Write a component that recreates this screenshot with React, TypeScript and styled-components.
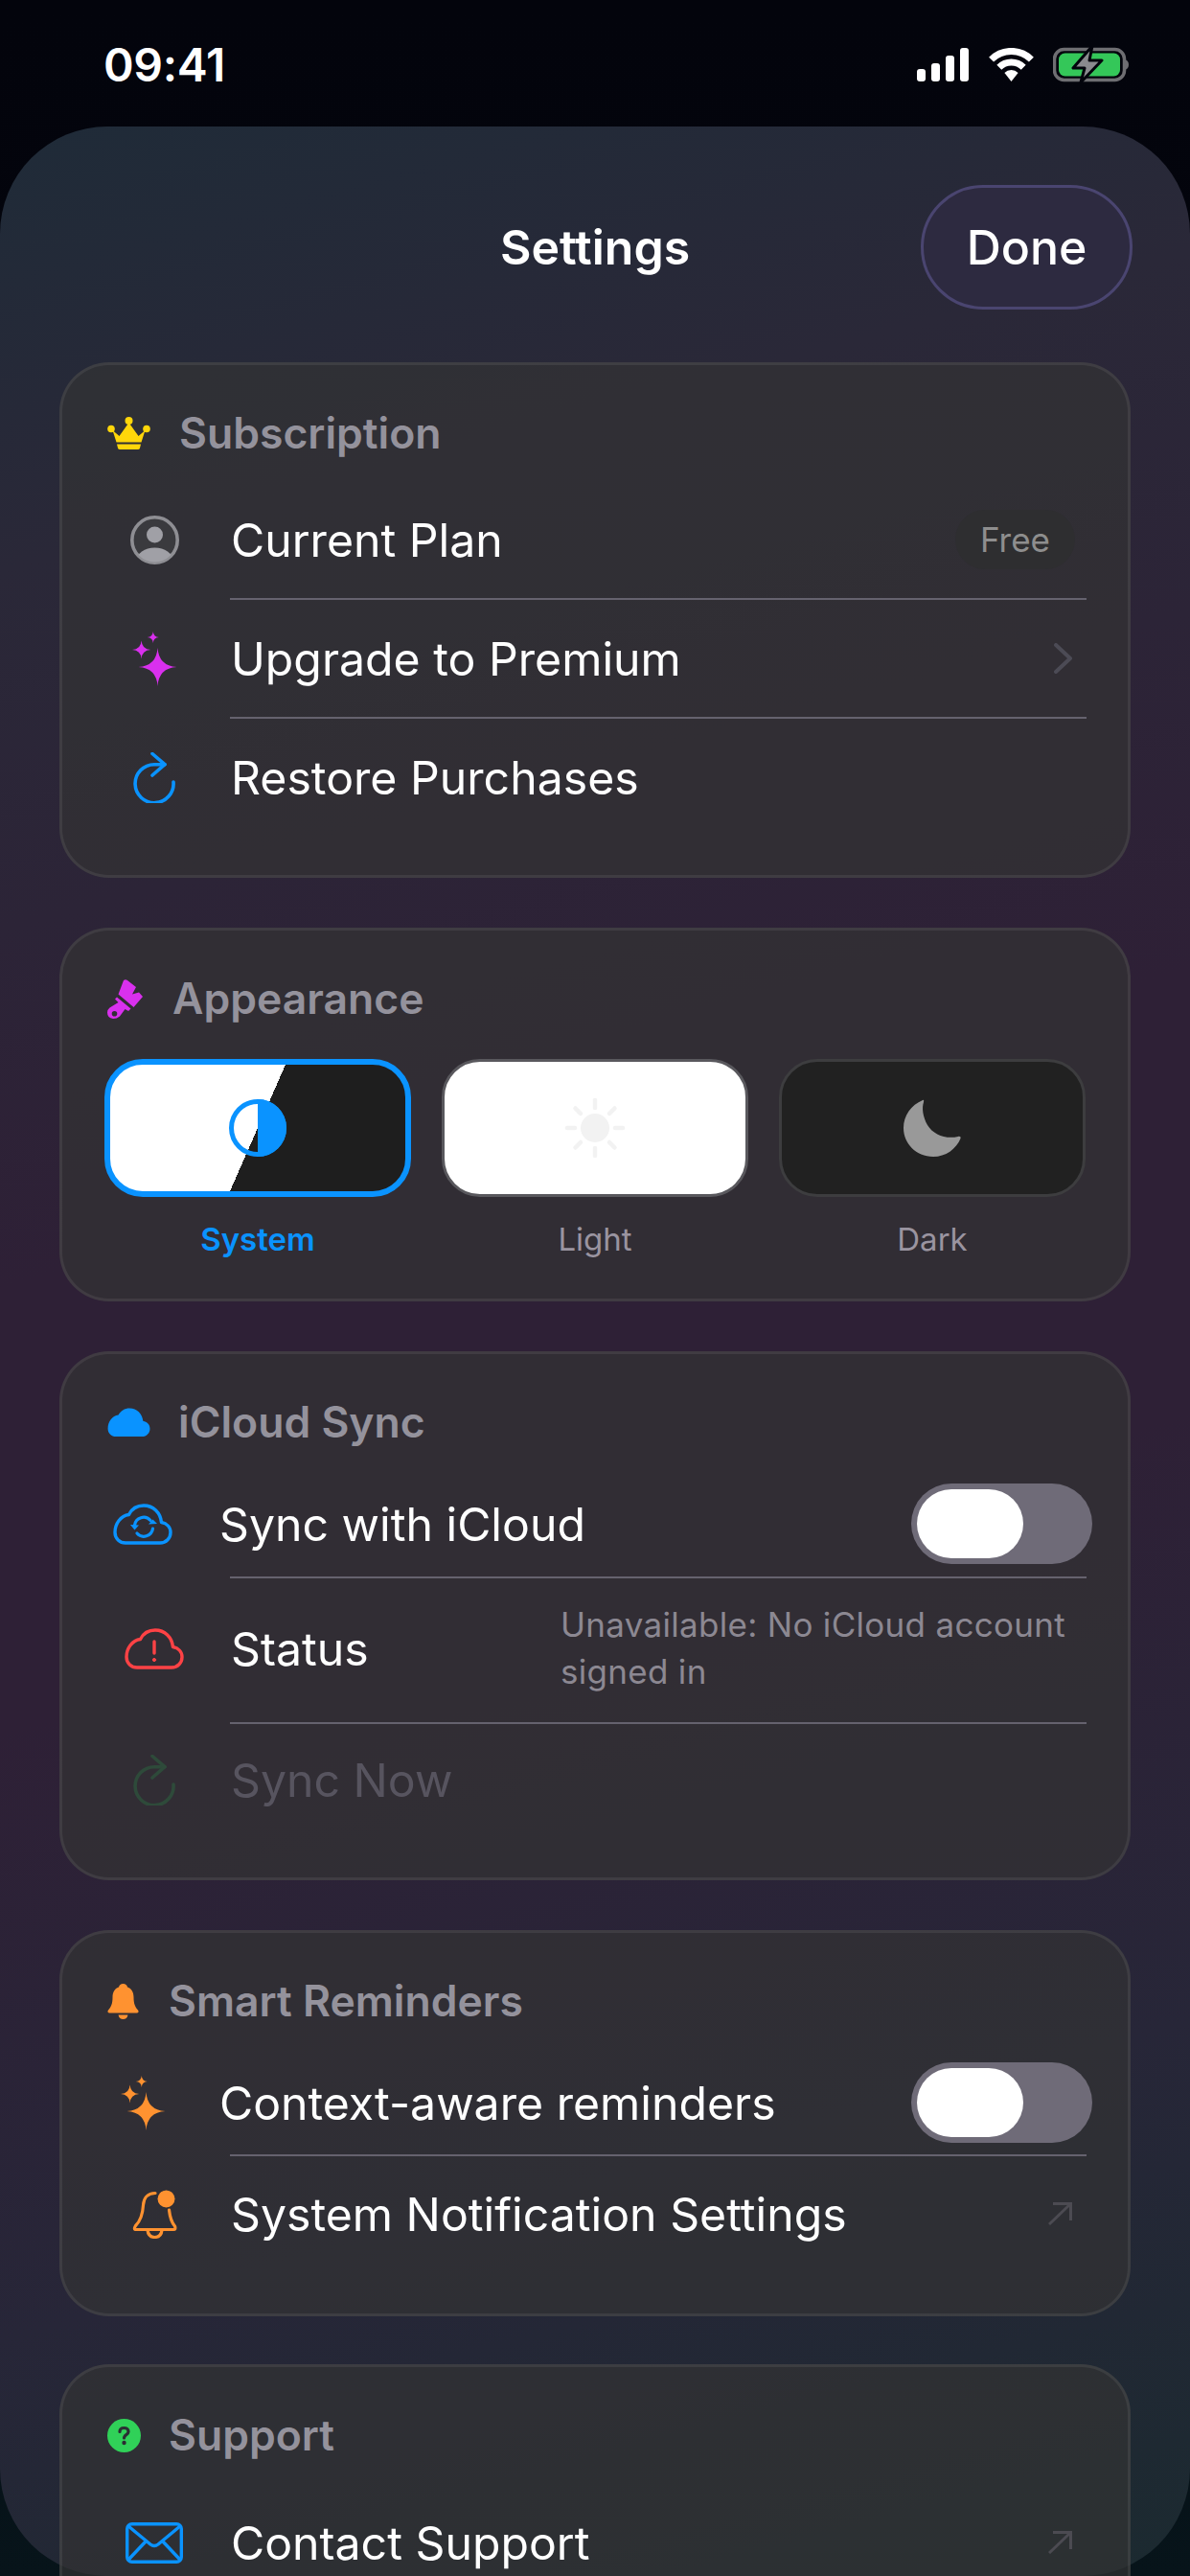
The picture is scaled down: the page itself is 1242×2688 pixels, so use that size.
import styled, { createGlobalStyle } from "styled-components";

const GlobalStyle = createGlobalStyle`
    html, body {
        margin: 0;
        padding: 0;
        background: #03040c;
    }
    * {
        box-sizing: border-box;
    }
`

const star = (cx: number, cy: number, r: number, w = r * 0.06) =>
    `M${cx} ${cy - r}Q${cx + w} ${cy - w} ${cx + r} ${cy}Q${cx + w} ${cy + w} ${cx} ${cy + r}Q${cx - w} ${cy + w} ${cx - r} ${cy}Q${cx - w} ${cy - w} ${cx} ${cy - r}Z`;

const CLOUD = "M13 41H49C55.5 41 60 36 60 30C60 24.5 56 20.5 50.5 19.5C49.5 9.5 42 2 32 2C25 2 19.5 5.5 16.5 11.5C8 12.5 2 21 2 30C2 36.5 7 41 13 41Z";

const Signal = () => (
    <svg width="55" height="35" viewBox="0 0 55 35" fill="#fff">
        <rect x="0" y="22" width="9" height="13" rx="3" />
        <rect x="15" y="16" width="9" height="19" rx="3" />
        <rect x="30" y="8" width="9" height="27" rx="3" />
        <rect x="45" y="0" width="9" height="35" rx="3" />
    </svg>
);

const Wifi = () => (
    <svg width="47" height="35" viewBox="0 0 47 35" fill="none" stroke="#fff" strokeWidth="7">
        <path d="M2.6 12.1A29.5 29.5 0 0 1 44.4 12.1" />
        <path d="M10.8 20.3A18 18 0 0 1 36.2 20.3" />
        <path d="M23.5 35L16.4 25.9A10 10 0 0 1 30.6 25.9Z" fill="#fff" stroke="none" />
    </svg>
);

const Battery = () => (
    <svg width="79" height="39" viewBox="0 0 79 39" fill="none">
        <rect x="1.5" y="3.5" width="73" height="32" rx="10" stroke="#6e6e72" strokeWidth="3.5" />
        <rect x="6" y="7.5" width="64" height="24" rx="6.5" fill="#34c759" />
        <path d="M76 14.5C78 15.5 79 17 79 19.5C79 22 78 23.5 76 24.5Z" fill="#6e6e72" />
        <path d="M41 0L21 23H33L29 38L51 15H38Z" fill="#8a8a8e" stroke="#03040c" strokeWidth="3" strokeLinejoin="round" />
    </svg>
);

const Crown = () => (
    <svg width="45" height="34" viewBox="0 0 45 34" fill="#ffd60a">
        <circle cx="22.5" cy="4" r="4" />
        <circle cx="4" cy="12.5" r="3.8" />
        <circle cx="41" cy="12.5" r="3.8" />
        <path d="M5.5 14L12.5 20L22.5 6L32.5 20L39.5 14L35.5 26.5H9.5Z" />
        <path d="M10 28.5H35L34 32.5Q33.5 34 32 34H13Q11.5 34 11 32.5Z" />
    </svg>
);

const PersonCircle = () => (
    <svg width="51" height="51" viewBox="0 0 51 51">
        <defs>
            <clipPath id="person-clip"><circle cx="25.5" cy="25.5" r="23" /></clipPath>
        </defs>
        <circle cx="25.5" cy="25.5" r="23.7" fill="#3a3a3e" stroke="#8e8e93" strokeWidth="3.6" />
        <circle cx="25.5" cy="20" r="8.5" fill="#a0a0a6" />
        <ellipse cx="25.5" cy="47" rx="19" ry="13.5" fill="#a0a0a6" clipPath="url(#person-clip)" />
    </svg>
);

const Sparkles = ({ color }: { color: string }) => (
    <svg width="47" height="57" viewBox="0 0 47 57" fill={color}>
        <path d={star(26.5, 37, 20)} />
        <path d={star(9.6, 19, 9.6)} />
        <path d={star(21.8, 6, 6)} />
    </svg>
);

const Refresh = ({ color }: { color: string }) => (
    <svg width="44" height="53" viewBox="0 0 44 53" fill="none" stroke={color} strokeWidth="3.6" strokeLinecap="round" strokeLinejoin="round">
        <path d="M33 12.7H22A20 20 0 1 0 42 31" />
        <path d="M20 1.5L33 12.7L20 24" />
    </svg>
);

const Brush = () => (
    <svg width="37" height="41" viewBox="0 0 37 41" fill="#d930ee">
        <path d="M17 1Q19 -0.5 21 1L30 8L26 15.5L33 13.5L37 18L27.5 29L11.5 15.5Z" />
        <path fillRule="evenodd" d="M10 18.5L24.5 30.5L22 33L18.5 31L13 38.5Q10 41 6 41Q0 40 0 34.5Q0 31.5 2.5 29.5L11.5 24L8 20.5ZM7.5 33A2.8 2.8 0 1 0 7.5 38.6A2.8 2.8 0 1 0 7.5 33Z" />
    </svg>
);

const CloudFill = () => (
    <svg width="45" height="31" viewBox="0 0 62 43" fill="#0a93ff">
        <path d={CLOUD} transform="translate(-1.5 -1.5) scale(1.05)" />
    </svg>
);

const CloudSync = () => (
    <svg width="62" height="43" viewBox="0 0 62 43" fill="none" stroke="#0a93ff" strokeWidth="3.4" strokeLinecap="round" strokeLinejoin="round">
        <path d={CLOUD} />
        <path d="M22.5 22.5A9.5 9.5 0 0 1 39 17.5" strokeWidth="3.2" />
        <path d="M41.5 26A9.5 9.5 0 0 1 25 31" strokeWidth="3.2" />
        <path d="M18 22L27 22.5L22.5 27.5Z" fill="#0a93ff" stroke="none" />
        <path d="M37 21.5L46 21L41.5 16.5Z" fill="#0a93ff" stroke="none" />
    </svg>
);

const CloudAlert = () => (
    <svg width="62" height="43" viewBox="0 0 62 43" fill="none" stroke="#ff4245" strokeWidth="3.4" strokeLinecap="round" strokeLinejoin="round">
        <path d={CLOUD} />
        <path d="M31 14V26" />
        <circle cx="31" cy="33" r="1.6" fill="#ff4245" strokeWidth="1" />
    </svg>
);

const BellFill = () => (
    <svg width="33" height="37" viewBox="0 0 33 37" fill="#ff9230">
        <path d="M16.5 0C19 0 20.5 1.5 21 3.5C25.5 5 27.5 9 27.5 14C27.5 21 29 24 32 27.5Q33.5 30 31 30.5H2Q-0.5 30 1 27.5C4 24 5.5 21 5.5 14C5.5 9 7.5 5 12 3.5C12.5 1.5 14 0 16.5 0Z" />
        <path d="M11.5 32.5H21.5C21 35.5 19 37 16.5 37C14 37 12 35.5 11.5 32.5Z" />
    </svg>
);

const BellBadge = () => (
    <svg width="47" height="51" viewBox="0 0 47 51" fill="none" stroke="#ff9230" strokeWidth="3.2" strokeLinecap="round" strokeLinejoin="round">
        <path d="M24 3.5C16 3.5 12 9 11.5 16C11 25 9 32 3.5 37.5Q1 41.5 4 41.5H43Q46 41.5 44.5 38C41 34 39.5 30 38.5 21" />
        <path d="M16 42C16.5 47 19.5 49.5 23.5 49.5C27.5 49.5 30.5 47 31 42" />
        <circle cx="35.5" cy="9.5" r="9" fill="#ff9230" stroke="none" />
    </svg>
);

const HelpDot = () => (
    <svg width="35" height="35" viewBox="0 0 35 35">
        <circle cx="17.5" cy="17.5" r="17.5" fill="#30d158" />
        <path d="M13 13.5C13 10.5 15 9.5 17.5 9.5C20 9.5 22 11 22 13.5C22 16.5 17.5 16.5 17.5 20" fill="none" stroke="#2b2d33" strokeWidth="3.2" strokeLinecap="round" />
        <circle cx="17.5" cy="25" r="2.2" fill="#2b2d33" />
    </svg>
);

const Mail = () => (
    <svg width="60" height="43" viewBox="0 0 60 43" fill="none" stroke="#0a93ff" strokeWidth="3.4" strokeLinejoin="round">
        <rect x="1.7" y="1.7" width="56.6" height="39.6" rx="5" />
        <path d="M3 4L26 23Q30 26 34 23L57 4" />
        <path d="M3 39L21.5 19.5M57 39L38.5 19.5" />
    </svg>
);

const ArrowUpRight = () => (
    <svg width="25" height="24" viewBox="0 0 25 24" fill="none" stroke="#4c4b52" strokeWidth="3">
        <path d="M1 23L23.5 1.5" />
        <path d="M5 1.5H23.5V19" />
    </svg>
);

const Chevron = () => (
    <svg width="19" height="32" viewBox="0 0 19 32" fill="none" stroke="#4c4b55" strokeWidth="4" strokeLinecap="round" strokeLinejoin="round">
        <path d="M2 2L17 16L2 30" />
    </svg>
);

const HalfCircle = () => (
    <svg width="60" height="60" viewBox="0 0 60 60" fill="none">
        <circle cx="30" cy="30" r="27.5" stroke="#0a93ff" strokeWidth="5" />
        <path d="M30 0A30 30 0 0 1 30 60Z" fill="#0a93ff" />
    </svg>
);

const Sun = () => (
    <svg width="64" height="64" viewBox="0 0 64 64" fill="#f2f2f2">
        <circle cx="32" cy="32" r="15" />
        <g stroke="#f2f2f2" strokeWidth="4.5" strokeLinecap="round">
            <path d="M32 3V11M32 53V61M3 32H11M53 32H61M11.5 11.5L17 17M47 47L52.5 52.5M52.5 11.5L47 17M17 47L11.5 52.5" />
        </g>
    </svg>
);

const Moon = () => (
    <svg width="60" height="60" viewBox="0 0 60 60" fill="#999">
        <path d="M20 1C21 0.5 21.5 1.5 21 3C19 9 20 18 25 27C31 37 44 42 57 39C59 38.5 60 39.5 59.5 41C55 52 44 60 31 60C13 60 0 46 0 30C0 17 8 6 20 1Z" />
    </svg>
);

const App = () => {
    return (
        <StScreen>
            <GlobalStyle />
            <StStatusBar>
                <StTime>09:41</StTime>
                <StStatusIcons>
                    <Signal />
                    <Wifi />
                    <Battery />
                </StStatusIcons>
            </StStatusBar>
            <StSheet>
                <StNav>
                    <span />
                    <StTitle>Settings</StTitle>
                    <StDone>Done</StDone>
                </StNav>
                <StCards>
                    <StCard $bottom={41}>
                        <StSectionHead $gap={30}>
                            <Crown />
                            <StSectionTitle>Subscription</StSectionTitle>
                        </StSectionHead>
                        <StRows $top={20}>
                            <StRow $height={122}>
                                <StIconCell><PersonCircle /></StIconCell>
                                <StRowLabel>Current Plan</StRowLabel>
                                <StBadge>Free</StBadge>
                            </StRow>
                            <StDivider />
                            <StRow $height={122}>
                                <StIconCell><Sparkles color="#d930ee" /></StIconCell>
                                <StRowLabel>Upgrade to Premium</StRowLabel>
                                <StTrail><Chevron /></StTrail>
                            </StRow>
                            <StDivider />
                            <StRow $height={122}>
                                <StIconCell><Refresh color="#0a93ff" /></StIconCell>
                                <StRowLabel>Restore Purchases</StRowLabel>
                            </StRow>
                        </StRows>
                    </StCard>

                    <StCard $bottom={40}>
                        <StSectionHead $gap={31}>
                            <Brush />
                            <StSectionTitle>Appearance</StSectionTitle>
                        </StSectionHead>
                        <StThemes>
                            <StTheme>
                                <StThemeTile $mode="system"><HalfCircle /></StThemeTile>
                                <StThemeLabel $active>System</StThemeLabel>
                            </StTheme>
                            <StTheme>
                                <StThemeTile $mode="light"><Sun /></StThemeTile>
                                <StThemeLabel>Light</StThemeLabel>
                            </StTheme>
                            <StTheme>
                                <StThemeTile $mode="dark"><Moon /></StThemeTile>
                                <StThemeLabel>Dark</StThemeLabel>
                            </StTheme>
                        </StThemes>
                    </StCard>

                    <StCard>
                        <StSectionHead $gap={29}>
                            <CloudFill />
                            <StSectionTitle>iCloud Sync</StSectionTitle>
                        </StSectionHead>
                        <StRows $top={21}>
                            <StRow $height={110}>
                                <StIconCell $inset><CloudSync /></StIconCell>
                                <StRowLabel>Sync with iCloud</StRowLabel>
                                <StToggle><StKnob /></StToggle>
                            </StRow>
                            <StDivider />
                            <StRow $height={150} $lift={4}>
                                <StIconCell><CloudAlert /></StIconCell>
                                <StRowLabel>Status</StRowLabel>
                                <StStatusText>Unavailable: No iCloud account signed in</StStatusText>
                            </StRow>
                            <StDivider />
                            <StRow $height={116}>
                                <StIconCell><Refresh color="#2e4a3a" /></StIconCell>
                                <StRowLabel $disabled>Sync Now</StRowLabel>
                            </StRow>
                        </StRows>
                    </StCard>

                    <StCard>
                        <StSectionHead $gap={31}>
                            <BellFill />
                            <StSectionTitle>Smart Reminders</StSectionTitle>
                        </StSectionHead>
                        <StRows $top={22}>
                            <StRow $height={108}>
                                <StIconCell $inset><Sparkles color="#ff9230" /></StIconCell>
                                <StRowLabel>Context-aware reminders</StRowLabel>
                                <StToggle><StKnob /></StToggle>
                            </StRow>
                            <StDivider />
                            <StRow $height={120}>
                                <StIconCell><BellBadge /></StIconCell>
                                <StRowLabel>System Notification Settings</StRowLabel>
                                <StTrail><ArrowUpRight /></StTrail>
                            </StRow>
                        </StRows>
                    </StCard>

                    <StCard>
                        <StSectionHead $gap={29}>
                            <HelpDot />
                            <StSectionTitle>Support</StSectionTitle>
                        </StSectionHead>
                        <StRows $top={22}>
                            <StRow $height={120}>
                                <StIconCell><Mail /></StIconCell>
                                <StRowLabel>Contact Support</StRowLabel>
                                <StTrail><ArrowUpRight /></StTrail>
                            </StRow>
                        </StRows>
                    </StCard>
                </StCards>
            </StSheet>
        </StScreen>
    );
};

export default App;

const StScreen = styled.div`
    width: 1242px;
    height: 2688px;
    overflow: hidden;
    display: flex;
    flex-direction: column;
    background: linear-gradient(180deg, #03040c 0%, #04070f 60%, #07141a 100%);
    font-family: 'Inter', 'Liberation Sans', sans-serif;
    color: #fff;
`

const StStatusBar = styled.div`
    flex: none;
    height: 132px;
    padding: 48px 64px 0 108px;
    display: flex;
    justify-content: space-between;
    align-items: flex-start;
`

const StTime = styled.div`
    font-size: 48px;
    font-weight: 600;
    line-height: 40px;
    letter-spacing: -0.3px;
`

const StStatusIcons = styled.div`
    display: flex;
    align-items: center;
    gap: 20px;
`

const StSheet = styled.div`
    flex: none;
    height: 2556px;
    padding: 61px 62px 0;
    border-radius: 112px;
    background: linear-gradient(165deg, #1f2b38 0%, #2a2838 16%, #2e2036 42%, #2e2036 58%, #272638 80%, #1b2a30 100%);
`

const StNav = styled.div`
    display: grid;
    grid-template-columns: 1fr auto 1fr;
    align-items: center;
`

const StTitle = styled.div`
    font-size: 50px;
    font-weight: 600;
`

const StDone = styled.button`
    justify-self: end;
    width: 221px;
    height: 130px;
    margin-right: -2px;
    border: 3px solid #4a4570;
    border-radius: 65px;
    background: #2d2a40;
    color: #fff;
    font-family: inherit;
    font-size: 50px;
    font-weight: 500;
`

const StCards = styled.div`
    margin-top: 55px;
    display: flex;
    flex-direction: column;
    gap: 52px;
`

const StCard = styled.section<{ $bottom?: number }>`
    padding: 41px 43px ${({ $bottom }) => $bottom ?? 44}px 47px;
    border: 3px solid rgba(255, 255, 255, .07);
    border-radius: 52px;
    background: rgba(51, 51, 51, .68);
    &:last-child {
        margin-top: -2px;
    }
`

const StSectionHead = styled.div<{ $gap: number }>`
    height: 60px;
    display: flex;
    align-items: center;
    gap: ${({ $gap }) => $gap}px;
`

const StSectionTitle = styled.div`
    font-size: 44.5px;
    font-weight: 600;
    color: #94929c;
`

const StRows = styled.div<{ $top: number }>`
    margin-top: ${({ $top }) => $top}px;
    display: flex;
    flex-direction: column;
`

const StRow = styled.div<{ $height: number; $lift?: number }>`
    height: ${({ $height }) => $height}px;
    padding-bottom: ${({ $lift }) => $lift ?? 0}px;
    display: flex;
    align-items: center;
`

const StDivider = styled.div`
    height: 2px;
    margin-left: 128px;
    background: #65626e;
`

const StIconCell = styled.div<{ $inset?: boolean }>`
    flex: none;
    width: 98px;
    margin-left: ${({ $inset }) => $inset ? '-12px' : '0'};
    margin-right: 31px;
    display: flex;
    justify-content: center;
    align-items: center;
`

const StRowLabel = styled.div<{ $disabled?: boolean }>`
    padding-top: 1px;
    font-size: 48.2px;
    font-weight: 400;
    color: ${({ $disabled }) => $disabled ? '#57545f' : '#fff'};
    white-space: nowrap;
`

const StBadge = styled.div`
    margin-left: auto;
    margin-right: 12px;
    width: 125px;
    height: 62px;
    border-radius: 31px;
    background: #2e2e30;
    color: #8e8e8e;
    font-size: 35px;
    display: flex;
    align-items: center;
    justify-content: center;
`

const StTrail = styled.div`
    margin-left: auto;
    margin-right: 15px;
    display: flex;
`

const StToggle = styled.div`
    margin-left: auto;
    margin-right: -6px;
    width: 189px;
    height: 84px;
    padding: 6px;
    border-radius: 42px;
    background: #6f6b78;
`

const StKnob = styled.div`
    width: 111px;
    height: 72px;
    border-radius: 36px;
    background: #fff;
`

const StStatusText = styled.div`
    margin-left: auto;
    width: 549px;
    font-size: 35px;
    line-height: 49px;
    letter-spacing: .3px;
    color: #8c8892;
`

const StThemes = styled.div`
    margin-top: 33px;
    margin-left: -3px;
    display: grid;
    grid-template-columns: repeat(3, 320px);
    column-gap: 32px;
`

const StTheme = styled.div`
    display: flex;
    flex-direction: column;
    align-items: center;
`

const tileBackground = {
    system: 'linear-gradient(113.7deg, #fff 50%, #1e1e1e 50%)',
    light: '#fff',
    dark: '#212121',
};

const tileBorder = {
    system: '6px solid #0a93ff',
    light: '3px solid #59585d',
    dark: '3px solid #3d3d3f',
};

const StThemeTile = styled.div<{ $mode: 'system' | 'light' | 'dark' }>`
    width: 320px;
    height: 144px;
    border: ${({ $mode }) => tileBorder[$mode]};
    border-radius: 40px;
    background: ${({ $mode }) => tileBackground[$mode]};
    display: flex;
    align-items: center;
    justify-content: center;
`

const StThemeLabel = styled.div<{ $active?: boolean }>`
    margin-top: 22px;
    font-size: 33px;
    line-height: 44px;
    font-weight: ${({ $active }) => $active ? 600 : 400};
    color: ${({ $active }) => $active ? '#0a93ff' : '#9a94a0'};
`
